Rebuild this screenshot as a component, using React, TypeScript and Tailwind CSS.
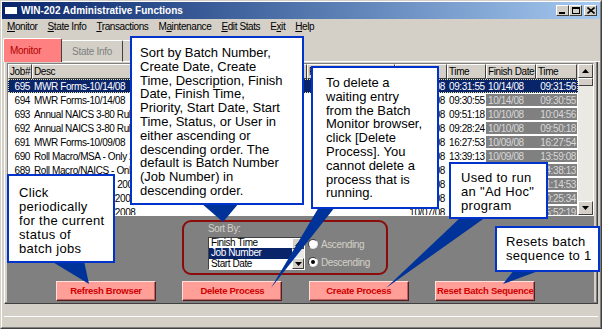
import React from 'react';

const ROWS = [
  { job: '695', desc: 'MWR Forms-10/14/08', start: '10/14/08', time: '09:31:55', fdate: '10/14/08', ftime: '09:31:56' },
  { job: '694', desc: 'MWR Forms-10/14/08', start: '10/14/08', time: '09:30:55', fdate: '10/14/08', ftime: '09:30:55' },
  { job: '693', desc: 'Annual NAICS 3-80 Rule Change', start: '10/10/08', time: '09:51:18', fdate: '10/10/08', ftime: '10:04:56' },
  { job: '692', desc: 'Annual NAICS 3-80 Rule Change', start: '10/10/08', time: '09:28:24', fdate: '10/10/08', ftime: '09:50:18' },
  { job: '691', desc: 'MWR Forms-10/09/08', start: '10/09/08', time: '16:27:53', fdate: '10/09/08', ftime: '16:27:54' },
  { job: '690', desc: 'Roll Macro/MSA - Only 2008', start: '10/09/08', time: '13:39:13', fdate: '10/09/08', ftime: '13:59:08' },
  { job: '689', desc: 'Roll Macro/NAICS - Only 2008', start: '10/08/08', time: '14:20:41', fdate: '10/08/08', ftime: '14:38:13' },
  { job: '688', desc: 'Roll Macro/County - 2008', start: '10/08/08', time: '11:02:10', fdate: '10/08/08', ftime: '11:14:53' },
  { job: '687', desc: 'MWR Forms-09/08/2008', start: '10/08/08', time: '10:11:47', fdate: '10/08/08', ftime: '10:25:34' },
  { job: '686', desc: 'MWR Forms-09/08/2008', start: '10/07/08', time: '15:40:02', fdate: '10/07/08', ftime: '15:52:19' },
];

// header label, width
const COLS: [string, number][] = [
  ['Job#', 24],
  ['Desc', 168],
  ['Status', 50],
  ['User', 57],
  ['Priority', 88],
  ['Start Date', 52],
  ['Time', 39],
  ['Finish Date', 50],
  ['Time', 41],
];

const MENU = [
  ['M', 'onitor'],
  ['S', 'tate Info'],
  ['T', 'ransactions'],
  ['M', 'aintenance'],
  ['E', 'dit Stats'],
  ['E', 'xit'],
  ['H', 'elp'],
];

const ui = "font-['Liberation_Sans',Arial,sans-serif]";

function Arrow({ down }: { down?: boolean }) {
  return (
    <svg width="7" height="4" viewBox="0 0 7 4">
      <path d={down ? 'M0 0 L7 0 L3.5 4 Z' : 'M3.5 0 L7 4 L0 4 Z'} fill="#000" />
    </svg>
  );
}

function ScrollBtn({ down, className = '' }: { down?: boolean; className?: string }) {
  return (
    <div className={`flex items-center justify-center bg-[#d4d0c8] border border-t-white border-l-white border-r-[#404040] border-b-[#404040] ${className}`}>
      <Arrow down={down} />
    </div>
  );
}

function TitleBtn({ kind }: { kind: 'min' | 'max' | 'close' }) {
  return (
    <div className="w-[13px] h-[11px] bg-[#d4d0c8] border border-t-white border-l-white border-r-[#404040] border-b-[#404040] flex items-center justify-center">
      {kind === 'min' && <div className="w-[6px] h-[2px] bg-black mt-[5px] -ml-[1px]" />}
      {kind === 'max' && <div className="w-[8px] h-[7px] border border-black border-t-2" />}
      {kind === 'close' && (
        <svg width="8" height="7" viewBox="0 0 8 7">
          <path d="M0.5 0.5 L7.5 6.5 M7.5 0.5 L0.5 6.5" stroke="#000" strokeWidth="1.6" />
        </svg>
      )}
    </div>
  );
}

function Callout({ className, children }: { className: string; children: React.ReactNode }) {
  return (
    <div className={`absolute bg-white border-2 border-[#0033cc] text-black text-[13px] leading-[13.8px] font-['Liberation_Sans',Arial,sans-serif] ${className}`}>
      {children}
    </div>
  );
}

function PinkButton({ label }: { label: string }) {
  return (
    <button className="w-[100px] h-[20px] bg-[#ff9f98] border border-t-[#ffe0dc] border-l-[#ffe0dc] border-r-[#502020] border-b-[#502020] shadow-[inset_-1px_-1px_0_#c06060] text-[#d00000] text-[9.5px] font-bold tracking-[-0.3px] leading-none">
      {label}
    </button>
  );
}

export default function App() {
  return (
    <div className={`relative w-[602px] h-[329px] overflow-hidden bg-[#d4d0c8] border border-t-[#d4d0c8] border-l-[#d4d0c8] border-r-[#404040] border-b-[#404040] ${ui}`}>
      <div className="h-full flex flex-col border border-t-white border-l-white border-r-[#808080] border-b-[#808080]">
        {/* title bar */}
        <div className="h-[17px] flex items-center bg-gradient-to-r from-[#0a246a] to-[#a6caf0] px-[2px]">
          <div className="w-[12px] h-[7px] bg-white ml-[1px] mr-[4px]" />
          <span className="text-white font-bold text-[10px]">WIN-202 Administrative Functions</span>
          <div className="ml-auto flex items-center mr-[1px]">
            <TitleBtn kind="min" />
            <TitleBtn kind="max" />
            <div className="w-[2px]" />
            <TitleBtn kind="close" />
          </div>
        </div>

        {/* menu */}
        <div className="h-[15px] flex items-center gap-[10px] pl-[5px] text-[10px] tracking-[-0.4px] text-black">
          {MENU.map(([u, rest], i) => (
            <span key={i}>
              {i === 3 ? (
                <>M<span className="underline">a</span>intenance</>
              ) : i === 5 ? (
                <>E<span className="underline">x</span>it</>
              ) : (
                <>
                  <span className="underline">{u}</span>
                  {rest}
                </>
              )}
            </span>
          ))}
        </div>

        {/* tabs */}
        <div className="h-[28px] flex items-end pl-[1px] text-[10px] tracking-[-0.3px]">
          <div className="w-[59px] h-[24px] bg-[#ff8080] border border-t-white border-l-white border-r-[#404040] border-b-0 rounded-t-[2px] pl-[6px] flex items-center text-[#b00000]">
            Monitor
          </div>
          <div className="w-[61px] h-[22px] bg-[#d4d0c8] border border-t-white border-l-0 border-r-[#404040] border-b-white rounded-tr-[2px] flex items-center justify-center text-[#808080]">
            State Info
          </div>
          <div className="w-[181px] h-[22px] bg-[#d4d0c8] border border-t-white border-l-0 border-r-[#404040] border-b-white rounded-tr-[2px] shadow-[inset_-1px_0_0_#808080]" />
          <div className="flex-1 h-[1px] bg-white" />
        </div>

        {/* tab panel */}
        <div className="ml-[2px] w-[594px] flex flex-col border-l border-l-white border-r border-r-[#404040] border-b border-b-[#404040] shadow-[inset_-1px_-1px_0_#808080]">
          {/* list */}
          <div className="ml-[2px] mt-[1px] w-[587px] h-[153px] flex bg-white border border-t-[#808080] border-l-[#808080] border-r-white border-b-white overflow-hidden">
            <div className="w-[570px] flex flex-col overflow-hidden text-[10px] tracking-[-0.4px]">
              <div className="h-[15px] flex shrink-0">
                {COLS.map(([h, w], i) => (
                  <div
                    key={i}
                    style={{ width: w }}
                    className="shrink-0 h-full bg-[#d4d0c8] border border-t-white border-l-white border-r-[#404040] border-b-[#404040] pl-[1px] flex items-center whitespace-nowrap overflow-hidden text-black"
                  >
                    {h}
                  </div>
                ))}
                <div className="flex-1 bg-[#d4d0c8]" />
              </div>
              {ROWS.map((r, idx) => {
                const sel = idx === 0;
                const vals = [r.job, r.desc, '', '', '', r.start, r.time, r.fdate, r.ftime];
                return (
                  <div
                    key={r.job}
                    className={`h-[14px] flex shrink-0 ${sel ? 'bg-[#0a246a] text-white outline outline-1 outline-dotted outline-offset-[-1px] outline-[#e8e4a0]' : 'text-black'}`}
                  >
                    {COLS.map(([, w], i) => {
                      const gray = !sel && i >= 7;
                      return (
                        <div key={i} style={{ width: w }} className={`shrink-0 h-full whitespace-nowrap overflow-hidden ${gray ? 'py-[1px]' : ''}`}>
                          <div
                            className={`h-full flex items-center ${i === 0 || i === 5 ? 'justify-end pr-[2px]' : i === 8 ? 'justify-end pr-[1px]' : 'pl-[2px]'} ${gray ? 'bg-[#808080] text-[#d8d8d8]' : ''}`}
                          >
                            {vals[i]}
                          </div>
                        </div>
                      );
                    })}
                  </div>
                );
              })}
            </div>
            <div className="w-[15px] ml-auto flex flex-col bg-[#ebe9e4]">
              <ScrollBtn className="h-[14px]" />
              <div className="h-[8px] bg-[#d4d0c8] border border-t-white border-l-white border-r-[#404040] border-b-[#404040]" />
              <div className="flex-1" />
              <ScrollBtn down className="h-[14px]" />
            </div>
          </div>

          {/* gray control area */}
          <div className="ml-[2px] w-[587px] h-[87px] bg-[#808080] flex flex-col pt-[4px]">
            <div className="ml-[175px] w-[206px] h-[55px] border-2 border-[#8b0a0a] rounded-[9px] flex pl-[24px] text-[10px] tracking-[-0.4px]">
              <div className="flex flex-col">
                <div className="h-[12px] mt-[1px] leading-[12px] text-[#d4d0c8]">Sort By:</div>
                <div className="mt-[2px] w-[97px] h-[33px] flex bg-white border border-t-[#404040] border-l-[#404040] border-r-white border-b-white">
                  <div className="flex-1 flex flex-col text-black leading-[10.3px]">
                    <div className="h-[10.3px] pl-[2px]">Finish Time</div>
                    <div className="h-[10.3px] pl-[2px] bg-[#0a246a] text-white">Job Number</div>
                    <div className="h-[10.3px] pl-[2px]">Start Date</div>
                  </div>
                  <div className="w-[12px] flex flex-col bg-[#ebe9e4]">
                    <ScrollBtn className="h-[11px]" />
                    <div className="flex-1" />
                    <ScrollBtn down className="h-[11px]" />
                  </div>
                </div>
              </div>
              <div className="ml-[3px] pt-[16px] flex flex-col gap-[6px] text-[#d4d0c8]">
                <div className="h-[12px] flex items-center gap-[3px]">
                  <div className="w-[10px] h-[10px] rounded-full bg-white border border-t-[#404040] border-l-[#404040] border-r-[#e0e0e0] border-b-[#e0e0e0]" />
                  <span>Ascending</span>
                </div>
                <div className="h-[12px] flex items-center gap-[3px]">
                  <div className="w-[10px] h-[10px] rounded-full bg-white border border-t-[#404040] border-l-[#404040] border-r-[#e0e0e0] border-b-[#e0e0e0] flex items-center justify-center">
                    <div className="w-[4px] h-[4px] rounded-full bg-black" />
                  </div>
                  <span>Descending</span>
                </div>
              </div>
            </div>
            <div className="ml-[49px] mt-[6px] flex gap-[26.4px]">
              <PinkButton label="Refresh Browser" />
              <PinkButton label="Delete Process" />
              <PinkButton label="Create Process" />
              <PinkButton label="Reset Batch Sequence" />
            </div>
          </div>
        </div>

        {/* bottom strip */}
        <div className="flex-1 flex flex-col">
          <div className="mt-[12px] h-[1px] bg-white mx-[2px]" />
        </div>
      </div>

      {/* callout pointers */}
      <svg className="absolute inset-0 pointer-events-none" width="602" height="329" viewBox="0 0 602 329">
        <g fill="#003399">
          <polygon points="200,202 238,202 222,221" />
          <polygon points="318,206 334,206 270,287" />
          <polygon points="50,260 83,260 88,283" />
          <polygon points="460,216 485,216 385,287" />
          <polygon points="513,269 540,269 502,283" />
        </g>
      </svg>

      {/* callouts */}
      <Callout className="left-[129px] top-[35px] w-[174px] h-[169px] pl-[8px] pt-[8px]">
        Sort by Batch Number,<br />
        Create Date, Create<br />
        Time, Description, Finish<br />
        Date, Finish Time,<br />
        Priority, Start Date, Start<br />
        Time, Status, or User in<br />
        either ascending or<br />
        descending order. The<br />
        default is Batch Number<br />
        (Job Number) in<br />
        descending order.
      </Callout>
      <Callout className="left-[310px] top-[65px] w-[128px] h-[143px] pl-[13px] pt-[8px]">
        To delete a<br />
        waiting entry<br />
        from the Batch<br />
        Monitor browser,<br />
        click [Delete<br />
        Process]. You<br />
        cannot delete a<br />
        process that is<br />
        running.
      </Callout>
      <Callout className="left-[6px] top-[173px] w-[108px] h-[89px] pl-[10px] pt-[10px] leading-[14px] tracking-[0.3px]">
        Click<br />
        periodically<br />
        for the current<br />
        status of<br />
        batch jobs
      </Callout>
      <Callout className="left-[448px] top-[161px] w-[99px] h-[57px] pl-[10px] pt-[7px] leading-[14px] tracking-[0.3px]">
        Used to run<br />
        an "Ad Hoc"<br />
        program
      </Callout>
      <Callout className="left-[494px] top-[225px] w-[105px] h-[46px] pl-[9px] pt-[7px] leading-[14px] tracking-[0.3px]">
        Resets batch<br />
        sequence to 1
      </Callout>
    </div>
  );
}
